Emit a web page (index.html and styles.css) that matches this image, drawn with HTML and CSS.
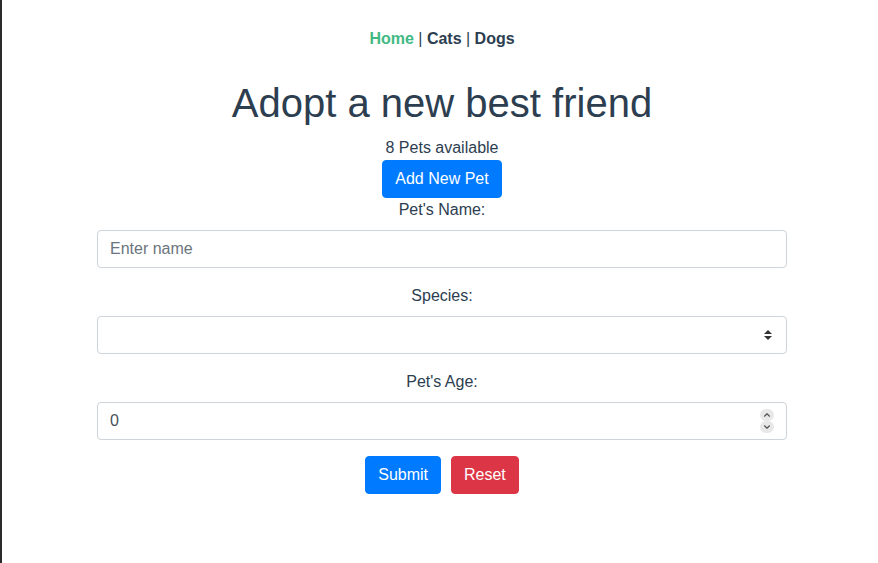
FILE: index.html
```html
<!DOCTYPE html>
<html lang="en">
<head>
<meta charset="utf-8">
<title>Adopt a new best friend</title>
<link rel="stylesheet" href="styles.css">
</head>
<body>
<div class="edge"></div>
<div class="main">
  <div id="app">
    <nav class="nav">
      <a class="nav-link active" href="#">Home</a> | <a class="nav-link" href="#">Cats</a> | <a class="nav-link" href="#">Dogs</a>
    </nav>
    <div class="container">
      <h1 class="title">Adopt a new best friend</h1>
      <p class="count">8 Pets available</p>
      <div class="toggle-row"><button class="btn btn-primary" type="button">Add New Pet</button></div>
      <form class="pet-form">
        <div class="form-group">
          <label class="form-label" for="pet-name">Pet's Name:</label>
          <input class="form-control" id="pet-name" type="text" placeholder="Enter name">
        </div>
        <div class="form-group">
          <label class="form-label" for="species">Species:</label>
          <select class="form-control form-select" id="species">
            <option value=""></option>
            <option value="cats">Cats</option>
            <option value="dogs">Dogs</option>
          </select>
        </div>
        <div class="form-group">
          <label class="form-label" for="age">Pet's Age:</label>
          <div class="number-wrap">
            <input class="form-control form-number" id="age" type="number" value="0">
            <span class="spinner" aria-hidden="true">
              <span class="spin-btn">
                <svg viewBox="0 0 12 12" width="12" height="12"><path d="M3.5 7.2 6 4.8 8.5 7.2" fill="none" stroke="#555" stroke-width="1.2" stroke-linecap="round" stroke-linejoin="round"/></svg>
              </span>
              <span class="spin-btn">
                <svg viewBox="0 0 12 12" width="12" height="12"><path d="M3.5 4.8 6 7.2 8.5 4.8" fill="none" stroke="#555" stroke-width="1.2" stroke-linecap="round" stroke-linejoin="round"/></svg>
              </span>
            </span>
          </div>
        </div>
        <div class="actions">
          <button class="btn btn-primary" type="submit">Submit</button>
          <button class="btn btn-danger" type="reset">Reset</button>
        </div>
      </form>
    </div>
  </div>
</div>
</body>
</html>
```
FILE: styles.css
```css
* { box-sizing: border-box; }
html, body { height: 100%; }
body {
  margin: 0;
  display: flex;
  background: #fff;
  font-family: "Liberation Sans", Arial, Helvetica, sans-serif;
  font-size: 16px;
  line-height: 1.5;
  color: #2c3e50;
}
.edge {
  width: 2px;
  flex: none;
  background: #2b2b2b;
}
.main {
  flex: 1;
  padding-left: 4px;
}
#app {
  text-align: center;
  -webkit-font-smoothing: antialiased;
}
.nav {
  padding: 30px;
  line-height: 1.15;
}
.nav-link {
  color: #2c3e50;
  font-weight: bold;
  text-decoration: none;
}
.nav-link.active { color: #42b983; }
.container {
  width: 720px;
  margin: 0 auto;
  padding: 0 15px;
}
.title {
  margin: 1px 0 9px;
  font-size: 40px;
  font-weight: 500;
  line-height: 1.2;
}
.count { margin: 0; }
.btn {
  display: inline-block;
  font-family: inherit;
  font-size: 16px;
  line-height: 1.5;
  padding: 6px 12px;
  border: 1px solid transparent;
  border-radius: 4px;
  color: #fff;
  cursor: pointer;
}
.btn-primary { background: #007bff; border-color: #007bff; }
.btn-danger { background: #dc3545; border-color: #dc3545; }
.pet-form { margin: 0; }
.form-group { margin-bottom: 16px; }
.form-label {
  display: inline-block;
  margin-bottom: 8px;
}
.form-control {
  display: block;
  width: 100%;
  height: 38px;
  padding: 6px 12px;
  font-family: inherit;
  font-size: 16px;
  line-height: 1.5;
  color: #495057;
  background: #fff;
  border: 1px solid #ced4da;
  border-radius: 4px;
}
.form-control::placeholder { color: #6c757d; opacity: 1; }
.form-select {
  -webkit-appearance: none;
  appearance: none;
  padding-right: 32px;
  background-image: url("data:image/svg+xml;utf8,<svg xmlns='http://www.w3.org/2000/svg' width='8' height='10' viewBox='0 0 8 10'><path d='M0 4 4 0 8 4Z M0 6 4 10 8 6Z' fill='%23333'/></svg>");
  background-repeat: no-repeat;
  background-position: right 14px center;
  background-size: 8px 10px;
}
.number-wrap { position: relative; }
.form-number { -moz-appearance: textfield; padding-right: 36px; }
.form-number::-webkit-inner-spin-button,
.form-number::-webkit-outer-spin-button {
  -webkit-appearance: none;
  margin: 0;
}
.spinner {
  position: absolute;
  right: 13px;
  top: 7px;
  display: flex;
  flex-direction: column;
  pointer-events: none;
}
.spin-btn {
  width: 14px;
  height: 12px;
  display: flex;
  align-items: center;
  justify-content: center;
  background: #e8e8e8;
  border-radius: 7px;
}
.spin-btn svg { display: block; }
.actions {
  display: flex;
  justify-content: center;
  gap: 10px;
}
```
